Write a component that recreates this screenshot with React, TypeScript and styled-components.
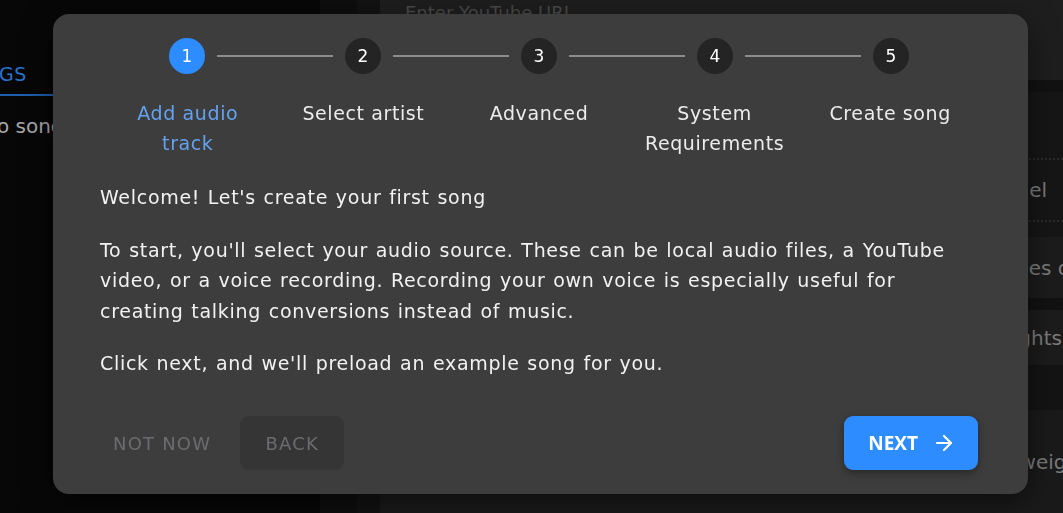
import styled, { createGlobalStyle } from 'styled-components'
import { ArrowRight } from 'lucide-react'

const GlobalStyle = createGlobalStyle`
	html, body {
		margin: 0;
		padding: 0;
		background: #070707;
	}
	body {
		font-family: 'DejaVu Sans', Inter, sans-serif;
		overflow: hidden;
	}
`

const steps = ['Add audio track', 'Select artist', 'Advanced', 'System Requirements', 'Create song']

function Backdrop() {
	return (
		<S.Page>
			<S.Sidebar>
				<S.TabRow>
					<S.Tab>SONGS</S.Tab>
				</S.TabRow>
				<S.Empty>No songs</S.Empty>
			</S.Sidebar>
			<S.Gutter $shade="#0e0e0e" $width={37} />
			<S.Gutter $shade="#121212" $width={23} />
			<S.Main>
				<S.UrlBar>
					<span>Enter YouTube URL</span>
				</S.UrlBar>
				<S.SettingsList>
					<S.SettingRow $shade="#161616" $height={64} $dotted>
						<S.RowText $offset={16}>Model</S.RowText>
					</S.SettingRow>
					<S.SettingRow $shade="#161616" $height={15} />
					<S.SettingRow $shade="#1c1c1c" $height={61}>
						<S.RowText $offset={-14}>Values of</S.RowText>
					</S.SettingRow>
					<S.SettingRow $shade="#121212" $height={12} />
					<S.SettingRow $shade="#1c1c1c" $height={55}>
						<S.RowText $offset={1}>Weights</S.RowText>
					</S.SettingRow>
					<S.SettingRow $shade="#141414" $height={45} />
					<S.SettingRow $shade="#1a1a1a" $height={103}>
						<S.RowText $offset={-24}>Lightweight</S.RowText>
					</S.SettingRow>
				</S.SettingsList>
			</S.Main>
		</S.Page>
	)
}

function Stepper({ active }: { active: number }) {
	return (
		<S.StepperBox>
			<S.CircleRow>
				{steps.map((_, i) => (
					<S.CircleGroup key={i} $first={i === 0}>
						{i > 0 && <S.Connector />}
						<S.Circle $active={i === active}>{i + 1}</S.Circle>
					</S.CircleGroup>
				))}
			</S.CircleRow>
			<S.LabelRow>
				{steps.map((label, i) => (
					<S.Label key={label} $active={i === active}>
						{label}
					</S.Label>
				))}
			</S.LabelRow>
		</S.StepperBox>
	)
}

function App() {
	return (
		<>
			<GlobalStyle />
			<Backdrop />
			<S.Overlay>
				<S.Dialog>
					<Stepper active={0} />
					<S.Body>
						<S.Para>Welcome! Let's create your first song</S.Para>
						<S.Para>
							To start, you'll select your audio source. These can be local audio files, a YouTube
							video, or a voice recording. Recording your own voice is especially useful for
							creating talking conversions instead of music.
						</S.Para>
						<S.Para>Click next, and we'll preload an example song for you.</S.Para>
					</S.Body>
					<S.Actions>
						<S.Left>
							<S.TextButton>NOT NOW</S.TextButton>
							<S.BackButton>BACK</S.BackButton>
						</S.Left>
						<S.NextButton>
							NEXT
							<ArrowRight size={24} strokeWidth={2.2} />
						</S.NextButton>
					</S.Actions>
				</S.Dialog>
			</S.Overlay>
		</>
	)
}
export default App

const Page = styled.div`
	display: flex;
	width: 1063px;
	height: 513px;
	overflow: hidden;
	background: #070707;
`
const Sidebar = styled.div`
	width: 320px;
	flex-shrink: 0;
	background: #070707;
	overflow: hidden;
`
const TabRow = styled.div`
	margin-top: 54px;
	height: 40px;
	width: 70px;
	border-bottom: 2px solid #1f5fae;
	display: flex;
	align-items: center;
	justify-content: flex-end;
	overflow: hidden;
`
const Tab = styled.div`
	margin-right: 43px;
	color: #2a72c9;
	font-size: 19px;
	letter-spacing: 0.6px;
	white-space: nowrap;
`
const Empty = styled.div`
	margin-top: 18px;
	width: 74px;
	display: flex;
	justify-content: flex-end;
	overflow: hidden;
	color: #a9a9a9;
	font-size: 20px;
	white-space: nowrap;
`
const Gutter = styled.div<{ $shade: string; $width: number }>`
	width: ${({ $width }) => $width}px;
	flex-shrink: 0;
	background: ${({ $shade }) => $shade};
`
const Main = styled.div`
	flex: 1;
	display: flex;
	flex-direction: column;
	background: #161616;
`
const UrlBar = styled.div`
	height: 92px;
	padding: 2px 0 0 25px;
	box-sizing: border-box;
	background: #1e1e1e;
	color: #4a4a4a;
	font-size: 18px;
	border-bottom: 12px solid #121212;
`
const SettingsList = styled.div`
	flex: 1;
	display: flex;
	flex-direction: column;
	padding-top: 66px;
`
const SettingRow = styled.div<{ $shade: string; $height: number; $dotted?: boolean }>`
	width: 100%;
	height: ${({ $height }) => $height}px;
	flex-shrink: 0;
	background: ${({ $shade }) => $shade};
	display: flex;
	align-items: center;
	justify-content: flex-end;
	overflow: hidden;
	box-sizing: border-box;
	border-top: ${({ $dotted }) => ($dotted ? '2px dotted #2b2b2b' : 'none')};
	border-bottom: ${({ $dotted }) => ($dotted ? '2px dotted #2b2b2b' : 'none')};
`
const RowText = styled.span<{ $offset: number }>`
	margin-right: ${({ $offset }) => $offset}px;
	color: #7c7c7c;
	font-size: 20px;
	white-space: nowrap;
`
const Overlay = styled.div`
	position: fixed;
	inset: 0;
`
const Dialog = styled.div`
	position: absolute;
	left: 53px;
	top: 14px;
	width: 975px;
	height: 480px;
	box-sizing: border-box;
	padding: 24px 50px 24px 47px;
	background: #3d3d3d;
	border-radius: 16px;
	box-shadow: 0 8px 30px rgba(0, 0, 0, 0.5);
	display: flex;
	flex-direction: column;
`
const StepperBox = styled.div`
	display: flex;
	flex-direction: column;
`
const CircleRow = styled.div`
	display: flex;
	align-items: center;
	padding: 0 69px;
`
const CircleGroup = styled.div<{ $first: boolean }>`
	display: flex;
	align-items: center;
	flex: ${({ $first }) => ($first ? '0 0 auto' : '1')};
`
const Connector = styled.div`
	flex: 1;
	height: 2px;
	background: #8c8c8c;
	margin: 0 12px;
`
const Circle = styled.div<{ $active: boolean }>`
	width: 36px;
	height: 36px;
	border-radius: 50%;
	flex-shrink: 0;
	display: flex;
	align-items: center;
	justify-content: center;
	background: ${({ $active }) => ($active ? '#2d8cff' : '#242424')};
	color: #fff;
	font-size: 17px;
`
const LabelRow = styled.div`
	display: grid;
	grid-template-columns: repeat(5, 1fr);
	margin-top: 24px;
`
const Label = styled.div<{ $active: boolean }>`
	justify-self: center;
	max-width: 150px;
	text-align: center;
	font-size: 19px;
	letter-spacing: 0.6px;
	line-height: 30px;
	color: ${({ $active }) => ($active ? '#64a2f0' : '#ececec')};
`
const Body = styled.div`
	margin-top: 24px;
	display: flex;
	flex-direction: column;
	gap: 22px;
`
const Para = styled.p`
	margin: 0;
	color: #f2f2f2;
	font-size: 19px;
	letter-spacing: 0.7px;
	word-spacing: 1px;
	line-height: 30.5px;
`
const Actions = styled.div`
	margin-top: auto;
	display: flex;
	justify-content: space-between;
	align-items: center;
`
const Left = styled.div`
	display: flex;
	align-items: center;
	gap: 16px;
`
const TextButton = styled.button`
	border: none;
	background: none;
	padding: 0 13px;
	height: 54px;
	font-family: inherit;
	font-size: 18px;
	letter-spacing: 1.2px;
	color: #6c6c70;
`
const BackButton = styled(TextButton)`
	background: #353535;
	border-radius: 9px;
	width: 104px;
`
const NextButton = styled.button`
	display: flex;
	align-items: center;
	gap: 14px;
	height: 54px;
	padding: 0 22px 0 24px;
	border: none;
	border-radius: 9px;
	background: #2d8cff;
	color: #fff;
	font-family: 'Open Sans', sans-serif;
	font-size: 19px;
	font-weight: 700;
	box-shadow: 0 3px 8px rgba(0, 0, 0, 0.35);
`

const S = {
	Page,
	Sidebar,
	TabRow,
	Tab,
	Empty,
	Gutter,
	Main,
	UrlBar,
	SettingsList,
	SettingRow,
	RowText,
	Overlay,
	Dialog,
	StepperBox,
	CircleRow,
	CircleGroup,
	Connector,
	Circle,
	LabelRow,
	Label,
	Body,
	Para,
	Actions,
	Left,
	TextButton,
	BackButton,
	NextButton,
}
